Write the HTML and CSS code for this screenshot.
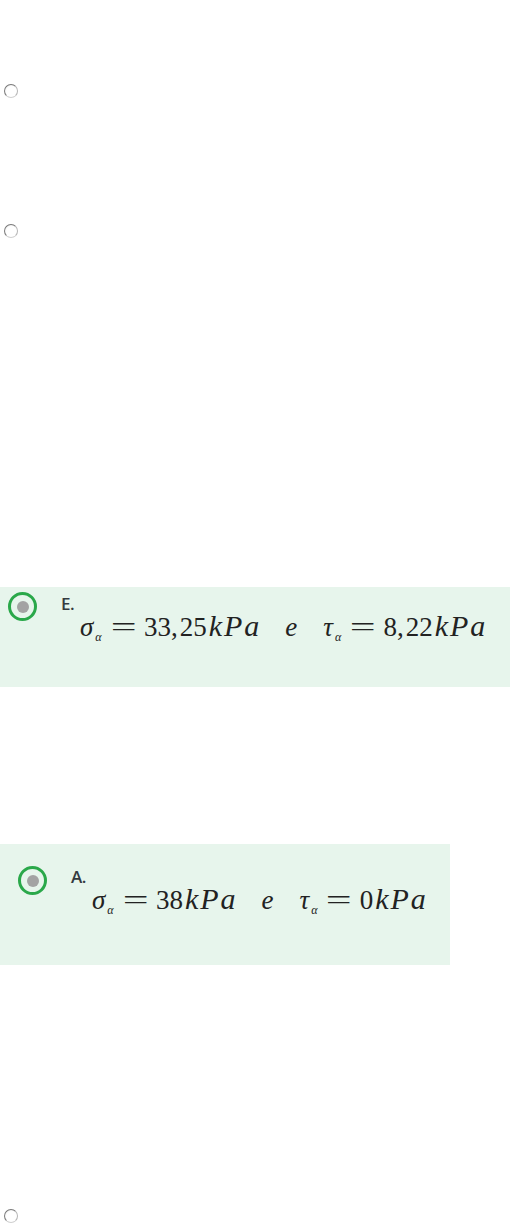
FILE: index.html
```html
<!DOCTYPE html>
<html lang="pt">
<head>
<meta charset="utf-8">
<link rel="stylesheet" href="styles.css">
</head>
<body>
<div class="page">
  <div class="plain q1"><span class="native-radio"></span></div>
  <div class="plain q2"><span class="native-radio"></span></div>

  <div class="answer answer-e">
    <span class="radio"><span class="dot"></span></span>
    <div class="content">
      <div class="letter">E.</div>
      <div class="math">
        <span class="var">σ</span><sub class="sub">α</sub><span class="rel">=</span><span class="num">33<span class="comma">,</span>25</span><span class="var unit">kPa</span><span class="var conj">e</span><span class="var">τ</span><sub class="sub">α</sub><span class="rel">=</span><span class="num">8<span class="comma">,</span>22</span><span class="var unit">kPa</span>
      </div>
    </div>
  </div>

  <div class="answer answer-a">
    <span class="radio"><span class="dot"></span></span>
    <div class="content">
      <div class="letter">A.</div>
      <div class="math">
        <span class="var">σ</span><sub class="sub">α</sub><span class="rel">=</span><span class="num">38</span><span class="var unit">kPa</span><span class="var conj">e</span><span class="var">τ</span><sub class="sub">α</sub><span class="rel">=</span><span class="num">0</span><span class="var unit">kPa</span>
      </div>
    </div>
  </div>

  <div class="plain q5"><span class="native-radio"></span></div>
</div>
</body>
</html>
```

FILE: styles.css
```css
html, body {
  margin: 0;
  padding: 0;
  background: #ffffff;
}
body {
  width: 511px;
  height: 1230px;
  overflow: hidden;
  font-family: "Open Sans", "Liberation Sans", sans-serif;
}
.page {
  display: flex;
  flex-direction: column;
}
.plain {
  display: flex;
  padding-left: 4px;
  height: 14px;
}
.q1 { margin-top: 84px; }
.q2 { margin-top: 126px; }
.q5 { margin-top: 244px; }

.native-radio {
  box-sizing: border-box;
  width: 14px;
  height: 14px;
  border-radius: 50%;
  border: 1.5px solid;
  border-color: #7a7a7a #b5b5b5 #cfcfcf #7a7a7a;
  background: radial-gradient(circle at 60% 60%, #ffffff 0%, #ffffff 55%, #e4e4e4 100%);
}

.answer {
  box-sizing: border-box;
  display: flex;
  align-items: flex-start;
  background: #e7f5ec;
}
.answer-e {
  margin-top: 349px;
  width: 510px;
  height: 100px;
  padding: 5px 0 0 8px;
}
.answer-a {
  margin-top: 157px;
  width: 450px;
  height: 121px;
  padding: 22px 0 0 18px;
}
.radio {
  box-sizing: border-box;
  flex: none;
  width: 29px;
  height: 29px;
  border-radius: 50%;
  border: 3px solid #2aa84a;
  display: flex;
  align-items: center;
  justify-content: center;
}
.dot {
  width: 12px;
  height: 12px;
  border-radius: 50%;
  background: #a3a3a3;
}
.content {
  margin-left: 24px;
  display: flex;
  flex-direction: column;
}
.letter {
  font-size: 17px;
  font-weight: 600;
  color: #343a40;
  line-height: 18px;
  margin-top: 3px;
  letter-spacing: -0.5px;
}
.answer-a .letter {
  margin-top: 2px;
}
.math {
  margin-left: 19px;
  margin-top: -2px;
  font-family: "Liberation Serif", "DejaVu Serif", serif;
  font-size: 27px;
  line-height: 30px;
  color: #222;
  white-space: nowrap;
}
.answer-a .math {
  margin-left: 21px;
}
.var {
  font-style: italic;
}
.num {
  font-style: normal;
}
.comma {
  margin-right: 2px;
}
.sub {
  font-style: italic;
  font-size: 12px;
  vertical-align: -5px;
  margin-left: 2px;
  line-height: 0;
}
.rel {
  display: inline-block;
  transform: scaleX(1.7);
  margin: 0 13px 0 14px;
}
.unit {
  margin-left: 2px;
  font-size: 30px;
  letter-spacing: 2px;
}
.conj {
  font-size: 27px;
  margin: 0 26px 0 24px;
  letter-spacing: 0;
}
```
